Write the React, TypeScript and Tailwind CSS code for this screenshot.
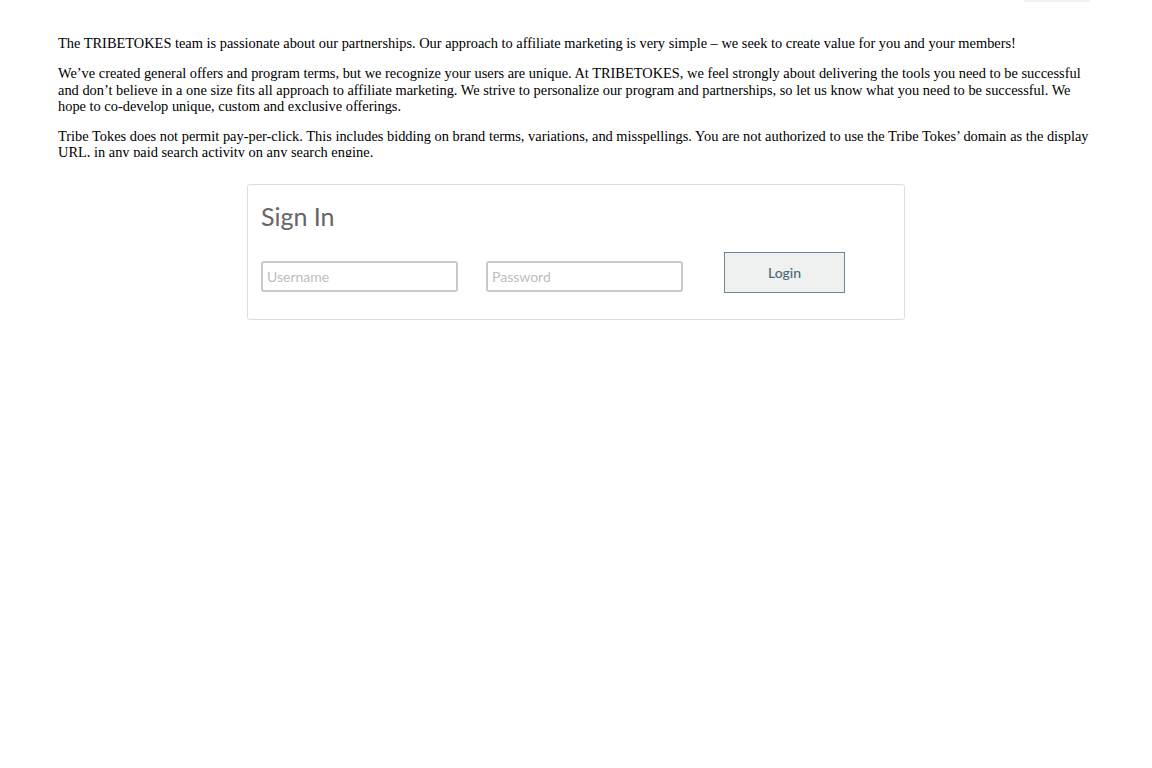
import React from 'react';

const serif = { fontFamily: '"Liberation Serif", "Times New Roman", serif' };
const sans = { fontFamily: 'Lato, "Open Sans", "Noto Sans", sans-serif' };

export default function App() {
  return (
    <div className="min-h-[768px] w-full bg-white relative">
      <div className="absolute right-[62px] top-0 h-[2px] w-[66px] bg-[#f1f1f1]" />

      <div className="pt-[35px] pl-[58px]">
        <div className="h-[122px] w-[1036px] overflow-hidden text-[14.4px] leading-[16.3px] text-black" style={serif}>
          <p>
            The TRIBETOKES team is passionate about our partnerships. Our approach to affiliate marketing is very simple – we seek to create value for you and your members!
          </p>
          <p className="mt-[14px]">
            We’ve created general offers and program terms, but we recognize your users are unique. At TRIBETOKES, we feel strongly about delivering the tools you need to be successful and don’t believe in a one size fits all approach to affiliate marketing. We strive to personalize our program and partnerships, so let us know what you need to be successful. We hope to co-develop unique, custom and exclusive offerings.
          </p>
          <p className="mt-[14px]">
            Tribe Tokes does not permit pay-per-click. This includes bidding on brand terms, variations, and misspellings. You are not authorized to use the Tribe Tokes’ domain as the display URL, in any paid search activity on any search engine.
          </p>
        </div>
      </div>

      <div className="mx-auto mt-[27px] w-[658px] rounded-[3px] border border-[#dedede] px-[13px] pt-[15px] pb-[27px]" style={sans}>
        <h2 className="text-[25px] leading-[32px] text-[#666] font-normal">Sign In</h2>
        <div className="mt-[20px] flex items-end">
          <input
            type="text"
            placeholder="Username"
            className="h-[31px] w-[197px] rounded-[3px] border-2 border-[#c9c9c9] px-[4px] text-[14px] text-[#555] placeholder:text-[#bdbdbd] outline-none"
          />
          <input
            type="password"
            placeholder="Password"
            className="ml-[28px] h-[31px] w-[197px] rounded-[3px] border-2 border-[#c9c9c9] px-[4px] text-[14px] text-[#555] placeholder:text-[#bdbdbd] outline-none"
          />
          <button className="ml-[41px] mb-[-1px] h-[41px] w-[121px] border border-[#6b8794] bg-[#eff0f0] text-[14px] font-medium text-[#4d6a78]">
            Login
          </button>
        </div>
      </div>
    </div>
  );
}
